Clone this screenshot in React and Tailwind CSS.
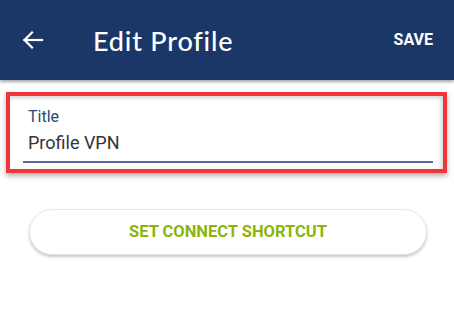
export default function App() {
  return (
    <div className="w-[454px] h-[330px] bg-white overflow-hidden font-['Roboto',sans-serif]">
      <header className="h-[80px] bg-[#1a3768] flex items-center shadow-[0_2px_3px_rgba(0,0,0,0.35)] relative z-10">
        <button type="button" className="ml-[22px] w-[22px] h-[20px] flex items-center justify-center text-white" aria-label="Back">
          <svg width="22" height="20" viewBox="0 0 22 20" fill="none" stroke="currentColor" strokeWidth="2.2" strokeLinecap="square">
            <path d="M2.5 10H20" />
            <path d="M10 2.5L2.5 10L10 17.5" />
          </svg>
        </button>
        <h1 className="ml-[49px] text-white text-[27px] font-medium tracking-[0.8px] font-['Lato',sans-serif] leading-none">
          Edit Profile
        </h1>
        <span className="ml-auto mr-[21px] text-white text-[16px] font-bold leading-none">SAVE</span>
      </header>

      <div className="mt-[12px] ml-[6px] mr-[7px] h-[81px] border-[4px] border-[#ef3535] bg-white shadow-[0_3px_5px_rgba(0,0,0,0.3),inset_-2px_2px_4px_rgba(0,0,0,0.18)]">
        <div className="pl-[18px] pt-[11px] text-[16px] leading-[20px] text-[#2a4879]">Title</div>
        <div className="ml-[13px] mr-[10px] border-b-2 border-[#546c93]">
          <div className="pl-[5px] pt-[4px] pb-[6px] text-[18px] leading-[24px] text-[#333333]">Profile VPN</div>
        </div>
      </div>

      <div className="mt-[36px] ml-[29px] mr-[27px]">
        <button
          type="button"
          className="w-full h-[46px] rounded-full bg-white border border-[#e6e6e6] shadow-[0_2px_3px_rgba(0,0,0,0.22)] flex items-center justify-center text-[16.5px] font-bold text-[#8ab50a]"
        >
          SET CONNECT SHORTCUT
        </button>
      </div>
    </div>
  );
}
